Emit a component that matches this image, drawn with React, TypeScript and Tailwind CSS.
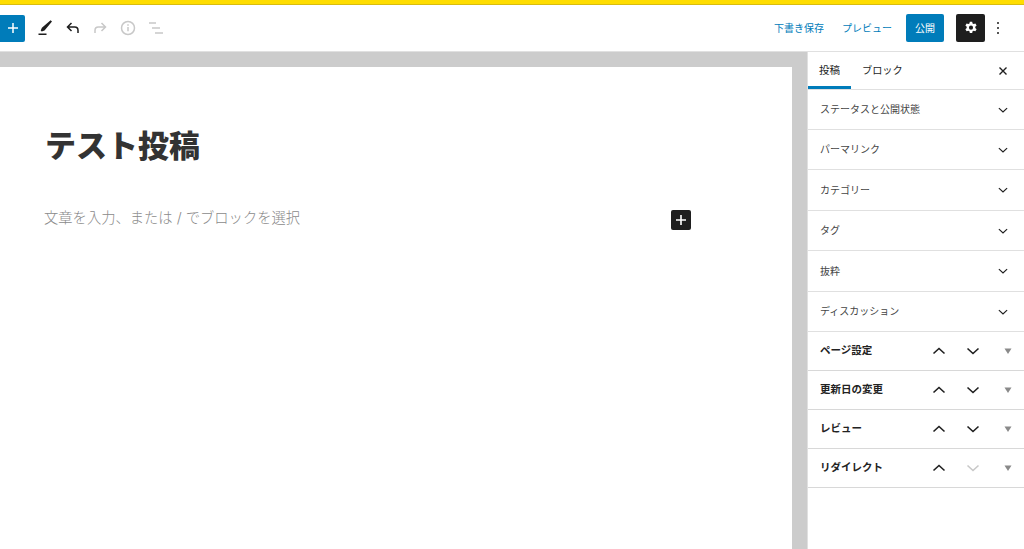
const font = "font-['Inter','Noto_Sans_CJK_JP',sans-serif]";

function Chevron({ up = false, className = "" }: { up?: boolean; className?: string }) {
  return (
    <svg width="24" height="24" viewBox="0 0 24 24" fill="none" stroke="currentColor" strokeWidth="1.6" className={className}>
      <path d={up ? "M6.5 14.5 12 9.5l5.5 5" : "M6.5 9.5 12 14.5l5.5-5"} />
    </svg>
  );
}

const panels = [
  { label: "ステータスと公開状態", h: "h-[40px]" },
  { label: "パーマリンク", h: "h-[40px]" },
  { label: "カテゴリー", h: "h-[41px]" },
  { label: "タグ", h: "h-[40px]" },
  { label: "抜粋", h: "h-[41px]" },
  { label: "ディスカッション", h: "h-[40px]" },
];

const metaBoxes = [
  { label: "ページ設定", downOff: false },
  { label: "更新日の変更", downOff: false },
  { label: "レビュー", downOff: false },
  { label: "リダイレクト", downOff: true },
];

function Toolbar() {
  return (
    <header className="h-[46px] flex items-center bg-white">
      <div className="w-[25px] h-[27px] bg-[#007cba] rounded-r-[2px] flex items-center justify-center text-white">
        <svg width="14" height="14" viewBox="0 0 14 14" fill="none" stroke="currentColor" strokeWidth="1.5">
          <path d="M7 2v10M2 7h10" />
        </svg>
      </div>
      <div className="flex items-center ml-[7px] gap-[3px]">
        <svg width="24" height="24" viewBox="0 0 24 24" className="text-[#1e1e1e]" fill="currentColor">
          <path d="M18.6 4.2 20 5.6l-7.5 8.8-2.8 1.2-1-1 1.2-2.9zM6.5 17.6h8v1.5h-8z" />
        </svg>
        <svg width="24" height="24" viewBox="0 0 24 24" fill="none" stroke="#1e1e1e" strokeWidth="1.5" className="ml-[1px]">
          <path d="M11.5 7 7.5 11l4 4M7.5 11h7.2c2 0 3.3 1.4 3.3 3.4V17" />
        </svg>
        <svg width="24" height="24" viewBox="0 0 24 24" fill="none" stroke="#c8c8c8" strokeWidth="1.5" className="ml-[2px]">
          <path d="M12.5 7l4 4-4 4M16.5 11H9.3C7.3 11 6 12.4 6 14.4V17" />
        </svg>
        <svg width="24" height="24" viewBox="0 0 24 24" fill="none" stroke="#c8c8c8" strokeWidth="1.5">
          <circle cx="12" cy="12" r="6.5" />
          <path d="M12 11v4.2M12 8.2v1.6" />
        </svg>
        <svg width="24" height="24" viewBox="0 0 24 24" fill="none" stroke="#c8c8c8" strokeWidth="1.5" className="ml-[1px]">
          <path d="M5 7h7M8 12h8M11 17h8" />
        </svg>
      </div>
      <div className="ml-auto flex items-center pr-[13px]">
        <span className="text-[10px] text-[#007cba]">下書き保存</span>
        <span className="text-[10px] text-[#007cba] ml-[18px]">プレビュー</span>
        <div className="ml-[14px] w-[38px] h-[28px] bg-[#007cba] rounded-[2px] text-white text-[10px] flex items-center justify-center">公開</div>
        <div className="ml-[12px] w-[29px] h-[28px] bg-[#1e1e1e] rounded-[2px] flex items-center justify-center">
          <svg width="16" height="16" viewBox="0 0 24 24" fill="white">
            <path fillRule="evenodd" d="M13.8 2.5h-3.6l-.5 2.7c-.6.2-1.2.5-1.7.9L5.4 5.2 3.6 8.3l2 1.8a7 7 0 0 0 0 1.9l-2 1.8 1.8 3.1 2.6-.9c.5.4 1.1.7 1.7.9l.5 2.7h3.6l.5-2.7c.6-.2 1.2-.5 1.7-.9l2.6.9 1.8-3.1-2-1.8a7 7 0 0 0 0-1.9l2-1.8-1.8-3.1-2.6.9c-.5-.4-1.1-.7-1.7-.9zM12 8.4a3.1 3.1 0 1 1 0 6.2 3.1 3.1 0 0 1 0-6.2z" />
          </svg>
        </div>
        <div className="w-[26px] flex justify-center">
          <svg width="4" height="14" viewBox="0 0 4 14" fill="#1e1e1e">
            <circle cx="2" cy="2" r="1" />
            <circle cx="2" cy="7" r="1" />
            <circle cx="2" cy="12" r="1" />
          </svg>
        </div>
      </div>
    </header>
  );
}

function Sidebar() {
  return (
    <aside className="w-[217px] bg-white text-[#1e1e1e] shrink-0 border-l border-[#e0e0e0]">
      <div className="h-[38px] flex items-center border-b border-[#e0e0e0] relative">
        <div className="w-[43px] h-full flex items-center justify-center text-[10.5px] border-b-[3px] border-[#007cba] pt-[3px]">投稿</div>
        <span className="ml-[11px] text-[10.2px]">ブロック</span>
        <svg width="10" height="10" viewBox="0 0 10 10" fill="none" stroke="#1e1e1e" strokeWidth="1.4" className="ml-auto mr-[16px]">
          <path d="M1.5 1.5l7 7M8.5 1.5l-7 7" />
        </svg>
      </div>
      {panels.map((p) => (
        <div key={p.label} className={`${p.h} flex items-center justify-between pl-[12px] pr-[9px] border-b border-[#e0e0e0] text-[10px] text-[#444]`}>
          {p.label}
          <Chevron className="text-[#1e1e1e] scale-75" />
        </div>
      ))}
      {metaBoxes.map((m) => (
        <div key={m.label} className="h-[39px] flex items-center pl-[12px] border-b-[1.5px] border-[#d8d8d8] text-[10.5px] font-bold text-[#222]">
          <span className="flex-1">{m.label}</span>
          <Chevron up className="text-[#1e1e1e]" />
          <Chevron className={`ml-[10px] ${m.downOff ? "text-[#c8c8c8]" : "text-[#1e1e1e]"}`} />
          <span className="w-[12px] h-[12px] ml-[17px] mr-[10px] flex items-center justify-center">
            <svg width="8" height="6" viewBox="0 0 8 6" fill="#8a8a8a">
              <path d="M0.5 0.5h7L4 6z" />
            </svg>
          </span>
        </div>
      ))}
    </aside>
  );
}

export default function App() {
  return (
    <div className={`${font} w-[1024px] h-[549px] overflow-hidden flex flex-col bg-[#cccccc]`}>
      <div className="h-[5px] bg-[#ffdd00] border-b border-[#d8bc10]" />
      <Toolbar />
      <div className="flex flex-1 min-h-0 border-t border-[#e0e0e0]">
        <main className="flex-1 pt-[15px] pr-[15px]">
          <div className="h-full bg-white pl-[45px] pr-[101px] pt-[57px]">
            <h1 className="text-[31px] leading-[44px] font-black text-[#333]">テスト投稿</h1>
            <div className="mt-[40px] flex items-start justify-between h-[28px]">
              <span className="text-[14.3px] leading-[20px] font-light text-[#8a8a8a] -ml-[1px]">文章を入力、または / でブロックを選択</span>
              <div className="w-[20px] h-[20px] bg-[#1e1e1e] rounded-[2px] flex items-center justify-center mt-[2px]">
                <svg width="12" height="12" viewBox="0 0 12 12" stroke="white" strokeWidth="1.6">
                  <path d="M6 1v10M1 6h10" />
                </svg>
              </div>
            </div>
          </div>
        </main>
        <Sidebar />
      </div>
    </div>
  );
}
